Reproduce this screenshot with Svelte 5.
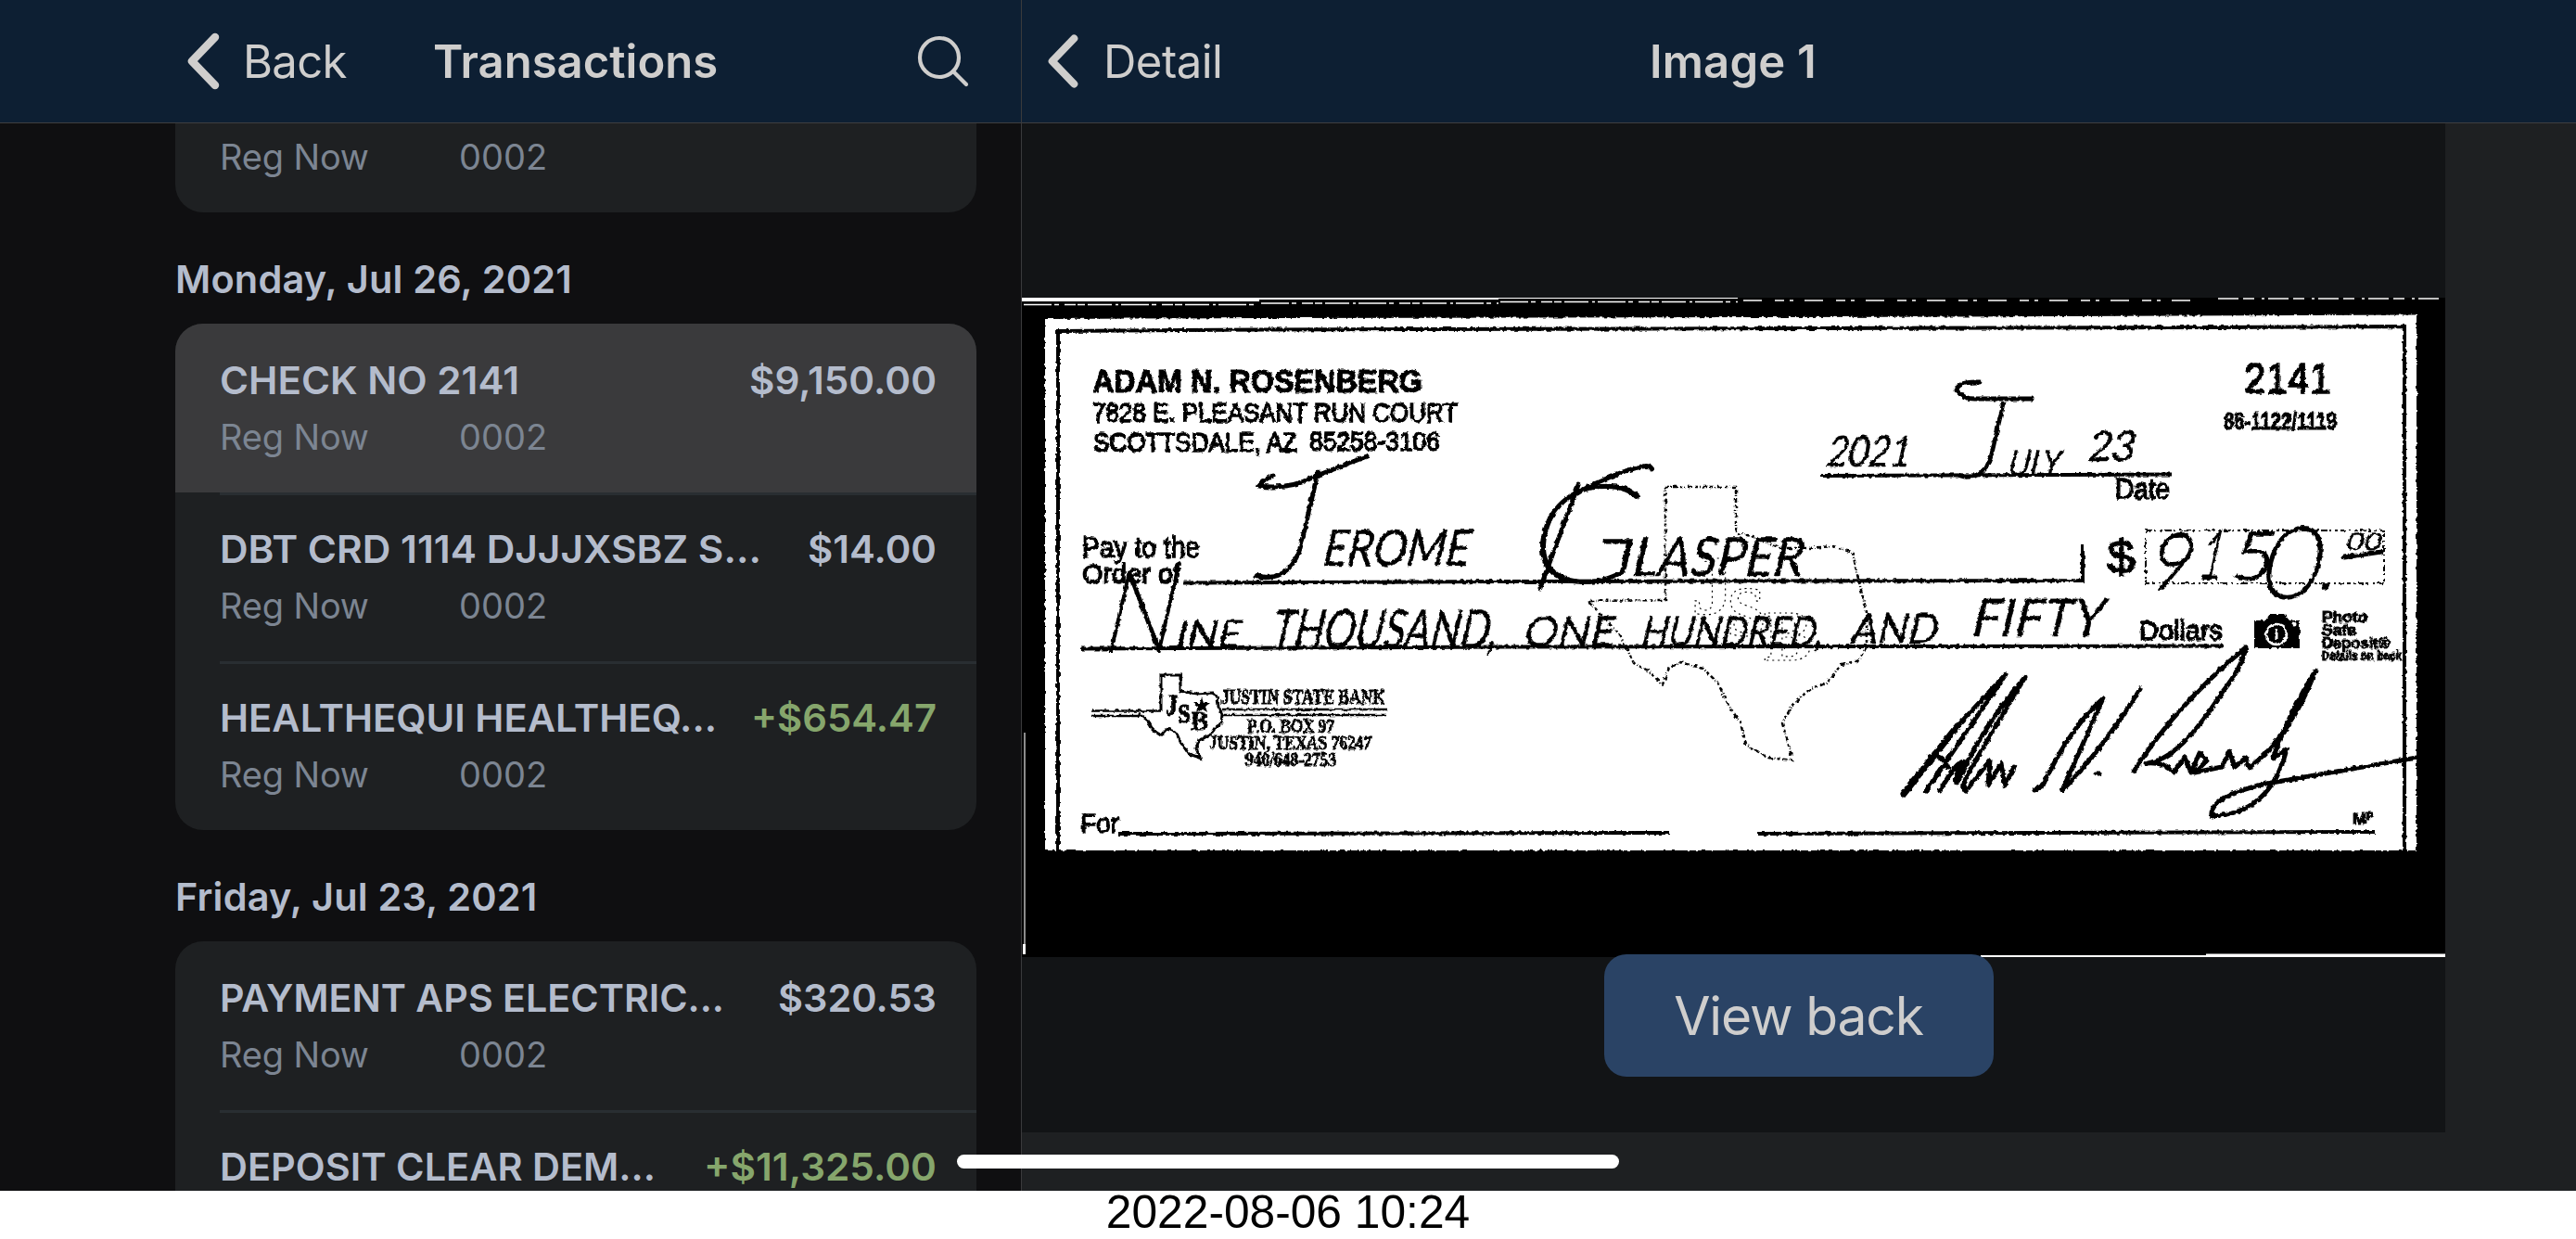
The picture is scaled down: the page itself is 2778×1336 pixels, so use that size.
<script>
	const groups = [
		{
			day: "Monday, Jul 26, 2021",
			rows: [
				{ name: "CHECK NO 2141", amount: "$9,150.00", nameWidth: 323, amountWidth: 202, selected: true },
				{ name: "DBT CRD 1114 DJJJXSBZ S...", amount: "$14.00", nameWidth: 584, amountWidth: 139 },
				{ name: "HEALTHEQUI HEALTHEQ...", amount: "+$654.47", nameWidth: 536, amountWidth: 200, credit: true },
			],
		},
		{
			day: "Friday, Jul 23, 2021",
			rows: [
				{ name: "PAYMENT APS ELECTRIC...", amount: "$320.53", nameWidth: 544, amountWidth: 171 },
				{ name: "DEPOSIT CLEAR DEM...", amount: "+$11,325.00", nameWidth: 470, amountWidth: 251, credit: true },
			],
		},
	];

	// x, baseline, width, size; kind picks the typeface
	const printed = [
		{ t: "ADAM N. ROSENBERG", x: 1178, y: 423, w: 356, s: 35, kind: "heavy" },
		{ t: "7828 E. PLEASANT RUN COURT", x: 1178, y: 455, w: 394, s: 30, kind: "plain" },
		{ t: "SCOTTSDALE, AZ", x: 1179, y: 487, w: 220, s: 29, kind: "plain" },
		{ t: "85258-3106", x: 1412, y: 486, w: 141, s: 29, kind: "plain" },
		{ t: "Pay to the", x: 1167, y: 601, w: 127, s: 31, kind: "plain" },
		{ t: "Order of", x: 1167, y: 629, w: 106, s: 30, kind: "plain" },
		{ t: "2141", x: 2420, y: 424, w: 94, s: 46, kind: "plain" },
		{ t: "86-1122/1119", x: 2398, y: 463, w: 122, s: 26, kind: "heavy" },
		{ t: "Date", x: 2281, y: 538, w: 59, s: 31, kind: "plain" },
		{ t: "$", x: 2272, y: 618, w: 31, s: 50, kind: "plain" },
		{ t: "Dollars", x: 2307, y: 690, w: 90, s: 30, kind: "plain" },
		{ t: "Photo", x: 2504, y: 671, w: 49, s: 16, kind: "heavy" },
		{ t: "Safe", x: 2504, y: 685, w: 37, s: 16, kind: "heavy" },
		{ t: "Deposit®", x: 2504, y: 699, w: 73, s: 16, kind: "heavy" },
		{ t: "Details on back", x: 2504, y: 712, w: 86, s: 14, kind: "heavy" },
		{ t: "JUSTIN STATE BANK", x: 1317, y: 759, w: 177, s: 23, kind: "serif" },
		{ t: "P.O. BOX 97", x: 1345, y: 790, w: 94, s: 21, kind: "serif" },
		{ t: "JUSTIN, TEXAS 76247", x: 1304, y: 808, w: 175, s: 21, kind: "serif" },
		{ t: "940/648-2753", x: 1343, y: 826, w: 98, s: 20, kind: "serif" },
		{ t: "J", x: 1257, y: 771, w: 13, s: 31, kind: "serif" },
		{ t: "S", x: 1270, y: 779, w: 14, s: 30, kind: "serif" },
		{ t: "B", x: 1284, y: 787, w: 19, s: 30, kind: "serif" },
		{ t: "For", x: 1165, y: 898, w: 42, s: 30, kind: "plain" },
		{ t: "M", x: 2537, y: 889, w: 15, s: 17, kind: "heavy" },
		{ t: "P", x: 2552, y: 884, w: 8, s: 11, kind: "heavy" },
	];

	const written = [
		{ t: "2021", x: 1968, y: 503, w: 90, s: 46 },
		{ t: "J", x: 2112, y: 514, w: 42, s: 112, tall: true },
		{ t: "ULY", x: 2164, y: 513, w: 56, s: 38 },
		{ t: "23", x: 2250, y: 497, w: 50, s: 45 },
		{ t: "J", x: 1352, y: 622, w: 60, s: 162, tall: true },
		{ t: "EROME", x: 1424, y: 610, w: 158, s: 54 },
		{ t: "G", x: 1642, y: 627, w: 118, s: 146, tall: true },
		{ t: "LASPER", x: 1758, y: 621, w: 184, s: 58 },
		{ t: "9", x: 2316, y: 634, w: 44, s: 82, tall: true },
		{ t: "1", x: 2370, y: 623, w: 24, s: 70, tall: true },
		{ t: "5", x: 2404, y: 624, w: 44, s: 70, tall: true },
		{ t: "0", x: 2435, y: 644, w: 62, s: 106, tall: true },
		{ t: ".", x: 2500, y: 636, w: 14, s: 60 },
		{ t: "00", x: 2529, y: 593, w: 38, s: 26 },
		{ t: "N", x: 1186, y: 702, w: 76, s: 122, tall: true },
		{ t: "INE", x: 1266, y: 698, w: 70, s: 41 },
		{ t: "THOUSAND,", x: 1368, y: 699, w: 244, s: 58 },
		{ t: "ONE", x: 1641, y: 697, w: 98, s: 45 },
		{ t: "HUNDRED,", x: 1768, y: 697, w: 196, s: 45 },
		{ t: "AND", x: 1994, y: 694, w: 94, s: 45 },
		{ t: "FIFTY", x: 2124, y: 686, w: 142, s: 56 },
	];
</script>

<div class="page">
	<div class="screen">
		<section class="list-pane">
			<header class="bar">
				<svg class="chevron" viewBox="0 0 36 62" width="36" height="62">
					<path d="M31 5 6 31 31 57" />
				</svg>
				<span class="back">Back</span>
				<h1 class="transactions">Transactions</h1>
				<svg class="search" viewBox="0 0 56 56" width="56" height="56">
					<circle cx="24" cy="24" r="21" />
					<path d="m39 39 14 14" />
				</svg>
			</header>
			<div class="list">
				<div class="card tail">
					<div class="row">
						<div class="meta"><span class="account">Reg Now</span><span>0002</span></div>
					</div>
				</div>
				{#each groups as group}
					<h2>{group.day}</h2>
					<div class="card">
						{#each group.rows as row}
							<div class="row" class:selected={row.selected}>
								<svg class="line" width="774" height="52" viewBox="0 0 774 52">
									<text y="41" textLength={row.nameWidth} lengthAdjust="spacingAndGlyphs">{row.name}</text>
									<text
										class:credit={row.credit}
										x={773 - row.amountWidth}
										y="41"
										textLength={row.amountWidth}
										lengthAdjust="spacingAndGlyphs">{row.amount}</text
									>
								</svg>
								<div class="meta"><span class="account">Reg Now</span><span>0002</span></div>
							</div>
						{/each}
					</div>
				{/each}
			</div>
		</section>

		<section class="image-pane">
			<header class="bar detail-bar">
				<svg class="chevron" viewBox="0 0 36 62" width="34" height="60">
					<path d="M31 5 6 31 31 57" />
				</svg>
				<span class="detail">Detail</span>
				<h1>Image 1</h1>
			</header>
			<div class="viewer">
				<svg class="check" viewBox="1102 321 1535 711" width="1535" height="711">
					<defs>
						<filter id="rough" x="-2%" y="-2%" width="104%" height="104%">
							<feTurbulence type="fractalNoise" baseFrequency="0.22" numOctaves="2" seed="4" />
							<feDisplacementMap in="SourceGraphic" scale="4" xChannelSelector="R" yChannelSelector="G" />
						</filter>
					</defs>
					<rect x="1102" y="321" width="1535" height="711" fill="#000" />
					<path fill="#fff" d="M1102 321h772v1h-258v1h-258v2h-256z" />
					<g fill="none" stroke="#fff" stroke-width="1.5">
						<path stroke-dasharray="30 3 5 6 12 2 8 3 26 4 3 3" d="M1104 328.500H1358M1360 327H1616M1618 325.500H1874" />
						<path stroke-dasharray="20 14 10 6 4 12" d="M1880 324H2370" />
						<path stroke-dasharray="22 5 12 8 3 4" d="M2392 322H2632" />
						<path stroke="#bbb" d="M1105 790V1018" />
					</g>
					<path fill="#fff" d="M1103 1018h3v11h-3zM2136 1030h243v-1.500h258v3.500H2136z" />
					<g filter="url(#rough)">
						<path fill="#fff" d="M1127 344 1358 343 2110 341.500 2606 339.500V917H1127z" />
						<g fill="none" stroke="#000" stroke-width="4">
							<path d="M1141 917V357L1358 355.500 2380 353 2593 352V917" />
							<path d="M1276 628.500 1616 627 2246 626V587" />
							<path d="M1166 699.500 1616 697.500 2397 696.500" />
							<path d="M1963 513 2342 511.500" />
							<path d="M1206 899 1800 898M1896 899 2561 897" />
							<path stroke-width="2.500" d="M1177 766.500h76M1177 772h52M1318 765h178M1318 771h177" />
						</g>
						<path
							class="outline"
							d="M1252 766V728h21v17l17 3 18-1 5 5 1 10 4 8-1 10-7 5-5 8-12 5-3 9 4 10-12-4-9-13-5-11-10-3-6 7-9-6-5-10-10-8"
						/>
						<path d="m1296 752 2 6h7l-5 4 2 6-6-4-6 4 2-6-5-4h7z" />
						<path
							class="ghost"
							d="M1796 525H1872V575L1890 578 1920 591 1950 591 1977 589 1998 596 2003 620 2013 660 2013 697 2005 712 1985 717 1970 737 1953 742 1933 760 1922 780 1928 800 1933 820 1907 817 1883 803 1877 780 1862 757 1853 737 1837 721 1813 714 1800 720 1793 738 1777 723 1762 715 1747 685 1713 648 1796 647Z"
						/>
						<rect class="amount-box" x="2314" y="572" width="257" height="57" />
					</g>
					<g class="ghost-text">
						<text x="1824" y="662" font-size="92">J</text>
						<text x="1862" y="685" font-size="76">S</text>
						<text x="1902" y="712" font-size="78">B</text>
					</g>
					<g filter="url(#rough)">
						{#each printed as p}
							<text class={p.kind} x={p.x} y={p.y} font-size={p.s} textLength={p.w} lengthAdjust="spacingAndGlyphs"
								>{p.t}</text
							>
						{/each}
						{#each written as p}
							<text
								class="hand"
								class:tall={p.tall}
								transform="translate({p.x} {p.y}) skewX(-13)"
								font-size={p.s}
								textLength={p.w}
								lengthAdjust="spacingAndGlyphs">{p.t}</text
							>
						{/each}
						<g class="ink">
							<!-- crossbars and underline -->
							<path d="M1373 513q-12 5-16 11 34 4 58-9l59-23" />
							<path d="M2135 412q-24-1-25 9 8 10 22 9h59" />
							<path d="M1781 506q0-10-46 9-22 9-34 17M1702 523 1661 634" />
							<path d="M2528 601 2568 595" />
							<path d="M2053 856 2110 784" stroke-width="7" />
							<path d="M2110 784 2163 727 2077 853M2080 816q16-4 21 12" />
							<path d="M2092 853q20-36 27-31-12 10-9 23 30-65 74-115-40 66-63 107-6 12-1 16l26-33-2 27 14-24 4 24 10-20" />
							<path d="M2194 852 2203 847Q2232 785 2268 753L2224 852Q2262 815 2308 743M2261 834h3" />
							<path
								d="M2301 832Q2345 762 2422 698 2418 720 2396 747 2350 820 2315 823 2334 821 2344 833L2356 817 2363 833 2372 812 2380 820 2367 833 2396 827 2404 810 2410 827 2422 817 2425 828Q2470 795 2497 723 2468 770 2451 818L2466 808Q2448 878 2385 880 2382 859 2444 845L2618 815"
							/>
						</g>
						<path d="M2431 669h12l5-7h15l6 7h11v30h-49z" />
						<circle cx="2455" cy="684" r="11" fill="none" stroke="#fff" stroke-width="2.500" />
						<path d="M2455 678v12" stroke="#fff" stroke-width="3" />
						<circle cx="2474" cy="673" r="2.500" fill="#fff" />
					</g>
				</svg>
				<button>View back</button>
			</div>
		</section>
		<div class="home-indicator"></div>
	</div>
	<footer>2022-08-06 10:24</footer>
</div>

<style>
	:global(body) {
		margin: 0;
		background: #fff;
	}

	.page {
		width: 2778px;
		height: 1336px;
		overflow: hidden;
		font-family: Inter, "Liberation Sans", sans-serif;
	}

	.screen {
		position: relative;
		display: grid;
		grid-template-columns: 1101px 1fr;
		height: 1284px;
		overflow: hidden;
		background: #0f0f11;
	}

	.list-pane {
		height: 1284px;
		overflow: hidden;
	}

	.image-pane {
		border-left: 1px solid #3a3a3c;
		background: #1e2022;
	}

	.bar {
		display: flex;
		align-items: center;
		box-sizing: border-box;
		height: 133px;
		padding-left: 201px;
		border-bottom: 1px solid #3f3f40;
		background: #0d1f33;
		color: #cfcecd;
		font-size: 49px;
	}

	h1,
	h2 {
		margin: 0;
		font-weight: 600;
	}

	h1 {
		font-size: 49px;
	}

	.chevron,
	.search {
		fill: none;
		stroke: #cfcecd;
		stroke-linecap: round;
		stroke-linejoin: round;
	}

	.chevron {
		stroke-width: 8.5;
	}

	.search {
		margin-left: 214px;
		stroke-width: 4.2;
	}

	.back {
		width: 112px;
		margin-left: 25px;
		letter-spacing: -0.7px;
	}

	.transactions {
		width: 308px;
		margin-left: 93px;
	}

	.detail-bar {
		padding-left: 27px;
	}

	.detail {
		width: 130px;
		margin-left: 27px;
		letter-spacing: -0.5px;
	}

	.detail-bar h1 {
		margin-left: 459px;
		letter-spacing: 0.2px;
	}

	.list {
		padding: 0 48px 0 189px;
	}

	.card {
		overflow: hidden;
		border-radius: 30px;
		background: #1e2022;
	}

	.tail {
		height: 96px;
		border-radius: 0 0 30px 30px;
	}

	.row {
		position: relative;
		box-sizing: border-box;
		height: 182px;
		padding: 35px 42px 0 48px;
	}

	.tail .row {
		padding-top: 1px;
	}

	.selected {
		background: #3a3a3c;
	}

	.row + .row::before {
		content: "";
		position: absolute;
		top: 0;
		right: 0;
		left: 48px;
		height: 3px;
		background: #292e32;
	}

	.line {
		display: block;
		fill: #b4bccc;
		font-size: 41.5px;
		font-weight: 560;
	}

	.credit {
		fill: #86a66c;
	}

	.meta {
		display: flex;
		padding-top: 9px;
		color: #7c8592;
		font-size: 38px;
		line-height: 52px;
	}

	.account {
		width: 258px;
		letter-spacing: -0.15px;
	}

	h2 {
		height: 120px;
		color: #b4bccc;
		font-size: 41.5px;
		font-weight: 600;
		letter-spacing: 0.15px;
		line-height: 145px;
	}

	.viewer {
		display: flex;
		flex-direction: column;
		align-items: center;
		box-sizing: border-box;
		width: 1535px;
		height: 1088px;
		padding-top: 188px;
		background: #121416;
	}

	.check {
		flex: none;
		display: block;
	}

	button {
		z-index: 1;
		width: 420px;
		height: 132px;
		margin: -3px 0 0 140px;
		padding: 0;
		border: 0;
		border-radius: 24px;
		background: #2a4365;
		color: #cfcecd;
		font: 400 57px Inter, sans-serif;
		letter-spacing: -1.2px;
	}

	.plain,
	.heavy {
		font-family: "Liberation Sans", Arial, sans-serif;
		stroke: #000;
	}

	.plain {
		stroke-width: 1.5px;
	}

	.heavy {
		font-weight: 700;
		stroke-width: 1.1px;
	}

	.serif {
		font-family: "Liberation Serif", serif;
		font-weight: 700;
		stroke: #000;
		stroke-width: 0.8px;
	}

	.hand {
		font-family: Lato, sans-serif;
		font-weight: 400;
		stroke: #000;
		stroke-width: 0.4px;
	}

	.tall {
		font-weight: 100;
		stroke-width: 3.8px;
	}

	.ink {
		fill: none;
		stroke: #000;
		stroke-width: 5;
		stroke-linecap: round;
		stroke-linejoin: round;
	}

	.outline {
		fill: none;
		stroke: #000;
		stroke-width: 3;
	}

	.ghost,
	.amount-box,
	.ghost-text {
		fill: none;
		stroke: #000;
		stroke-width: 2.5;
		stroke-dasharray: 3 2 1 2 5 3;
	}

	.ghost-text {
		font-family: "Liberation Serif", serif;
		font-weight: 700;
		stroke-width: 1.2;
		stroke-dasharray: 2 4;
	}

	.amount-box {
		stroke-width: 2;
		stroke-dasharray: 7 2 2 4 3 3;
	}

	.home-indicator {
		position: absolute;
		bottom: 24px;
		left: 1032px;
		width: 714px;
		height: 15px;
		border-radius: 8px;
		background: #fff;
	}

	footer {
		height: 52px;
		color: #000;
		font: 49.7px/46px "Liberation Sans", Arial, sans-serif;
		text-align: center;
	}
</style>
